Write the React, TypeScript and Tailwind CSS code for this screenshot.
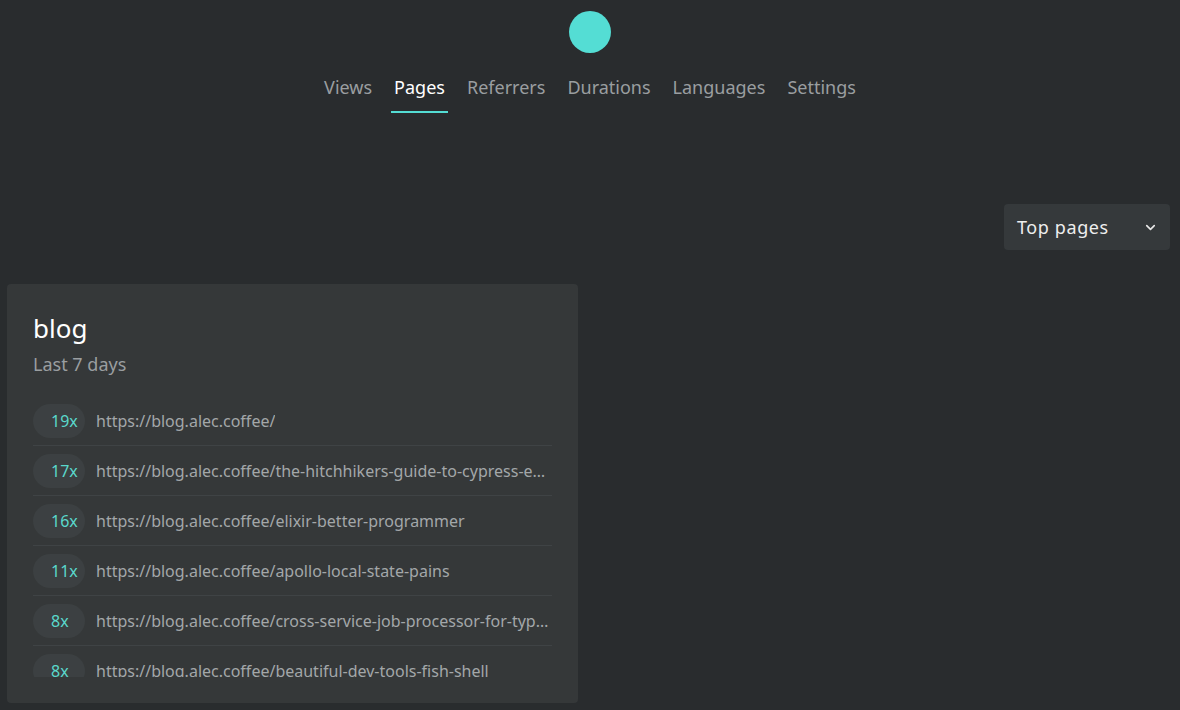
import React from "react";

const tabs = ["Views", "Pages", "Referrers", "Durations", "Languages", "Settings"];
const rows: [string, string][] = [
  ["19x", "https://blog.alec.coffee/"],
  ["17x", "https://blog.alec.coffee/the-hitchhikers-guide-to-cypress-end-to-end-testing"],
  ["16x", "https://blog.alec.coffee/elixir-better-programmer"],
  ["11x", "https://blog.alec.coffee/apollo-local-state-pains"],
  ["8x", "https://blog.alec.coffee/cross-service-job-processor-for-typescript"],
  ["8x", "https://blog.alec.coffee/beautiful-dev-tools-fish-shell"],
  ["7x", "https://blog.alec.coffee/"],
];

export default function App() {
  return (
    <div
      className="w-[1180px] h-[710px] overflow-hidden bg-[#292c2e] text-white"
      style={{ fontFamily: '"Noto Sans", "Open Sans", sans-serif' }}
    >
      <div className="flex flex-col items-center pt-[11px]">
        <div className="w-[42px] h-[42px] rounded-full bg-[#54ddd4]" />
        <nav className="flex gap-[22px] mt-[19px] text-[18px]">
          {tabs.map((t) => (
            <div key={t} className="flex flex-col items-center">
              <span className={t === "Pages" ? "text-white leading-[30px]" : "text-[#9a9ea0] leading-[30px]"}>{t}</span>
              <div className={t === "Pages" ? "mt-[9px] h-[2px] w-[calc(100%+6px)] bg-[#54ddd4]" : "mt-[9px] h-[2px]"} />
            </div>
          ))}
        </nav>
      </div>
      <div className="flex justify-end pr-[10px] mt-[91px]">
        <div className="w-[166px] h-[46px] rounded-[4px] bg-[#35393b] flex items-center justify-between pl-[13px] pr-[12px]">
          <span className="text-[18px] tracking-[0.6px] text-[#eeeeee]">Top pages</span>
          <svg width="15" height="15" viewBox="0 0 24 24" fill="none" stroke="#e8e8e8" strokeWidth="2.6" strokeLinecap="round" strokeLinejoin="round">
            <path d="M6 9l6 6 6-6" />
          </svg>
        </div>
      </div>
      <div className="ml-[7px] mt-[34px] w-[571px] h-[419px] rounded-[4px] bg-[#353839] pt-[26px] pl-[26px] pr-[26px]">
        <div className="text-[26px] leading-[36px] text-white">blog</div>
        <div className="text-[18px] leading-[24px] text-[#9a9ea0] mt-[6px]">Last 7 days</div>
        <div className="mt-[20px] h-[281px] overflow-hidden">
          {rows.map(([c, u], i) => (
            <div key={i} className="flex items-center h-[50px] border-b border-[#3f4345]">
              <div className="w-[52px] h-[34px] shrink-0 rounded-full bg-[#3c4042] flex items-center pl-[18px] text-[16px] text-[#5ad8cc]">
                {c}
              </div>
              <div className="ml-[11px] text-[16px] text-[#a3a7a9] truncate">{u}</div>
            </div>
          ))}
        </div>
      </div>
    </div>
  );
}
